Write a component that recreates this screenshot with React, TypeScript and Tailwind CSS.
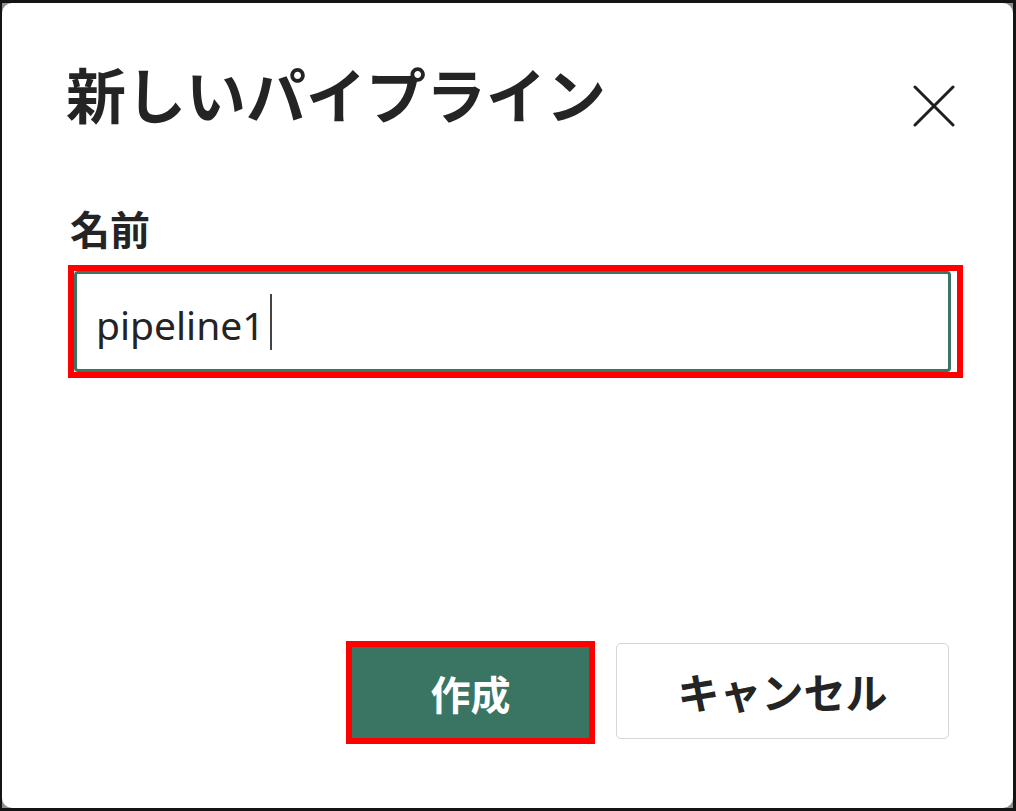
const jp = "font-['Noto_Sans_CJK_JP',sans-serif]";

function CloseIcon() {
  return (
    <svg width="42" height="42" viewBox="0 0 42 42" fill="none">
      <path d="M2 2L40 40M40 2L2 40" stroke="#1f1f1f" strokeWidth="3" strokeLinecap="round" />
    </svg>
  );
}

function App() {
  return (
    <div className="w-[1016px] h-[811px] bg-[#141414] pt-[3px] pl-[2px] pr-[3px] pb-[3px]">
      <div className="h-full bg-[#8f8f8f]">
        <div className={`h-full bg-white rounded-[10px] flex flex-col pl-[64px] pr-[50px] text-[#242424] ${jp}`}>
          {/* header */}
          <div className="flex items-start justify-between">
            <h1 className="mt-[60px] text-[60px] font-bold leading-none tracking-normal">新しいパイプライン</h1>
            <button className="mt-[82px] mr-[8px]">
              <CloseIcon />
            </button>
          </div>

          {/* name field */}
          <label className="mt-[81px] ml-[4px] text-[40px] font-bold leading-none">名前</label>
          <div className="mt-[17px] ml-[2px] border-[6px] border-[#ff0000]">
            <div className="mr-[6px] h-[101px] rounded-[4px] border-[3px] border-[#3b7563] flex items-center pl-[19px]">
              <span className="pt-[5px] font-['Noto_Sans',sans-serif] text-[39px] text-[#242424] leading-none">pipeline1</span>
              <span className="ml-[5px] w-[2px] h-[56px] bg-[#444]" />
            </div>
          </div>

          {/* footer buttons */}
          <div className="mt-auto mb-[64px] flex items-start justify-end gap-[21px] pr-[14px]">
            <div className="border-[6px] border-[#ff0000]">
              <button className="w-[237px] h-[91px] bg-[#3a7563] text-white text-[40px] font-bold leading-none">
                作成
              </button>
            </div>
            <button className="mt-[2px] w-[333px] h-[96px] rounded-[5px] border border-[#d6d6d6] bg-white text-[42px] font-bold leading-none text-[#242424]">
              キャンセル
            </button>
          </div>
        </div>
      </div>
    </div>
  );
}

export default App;
